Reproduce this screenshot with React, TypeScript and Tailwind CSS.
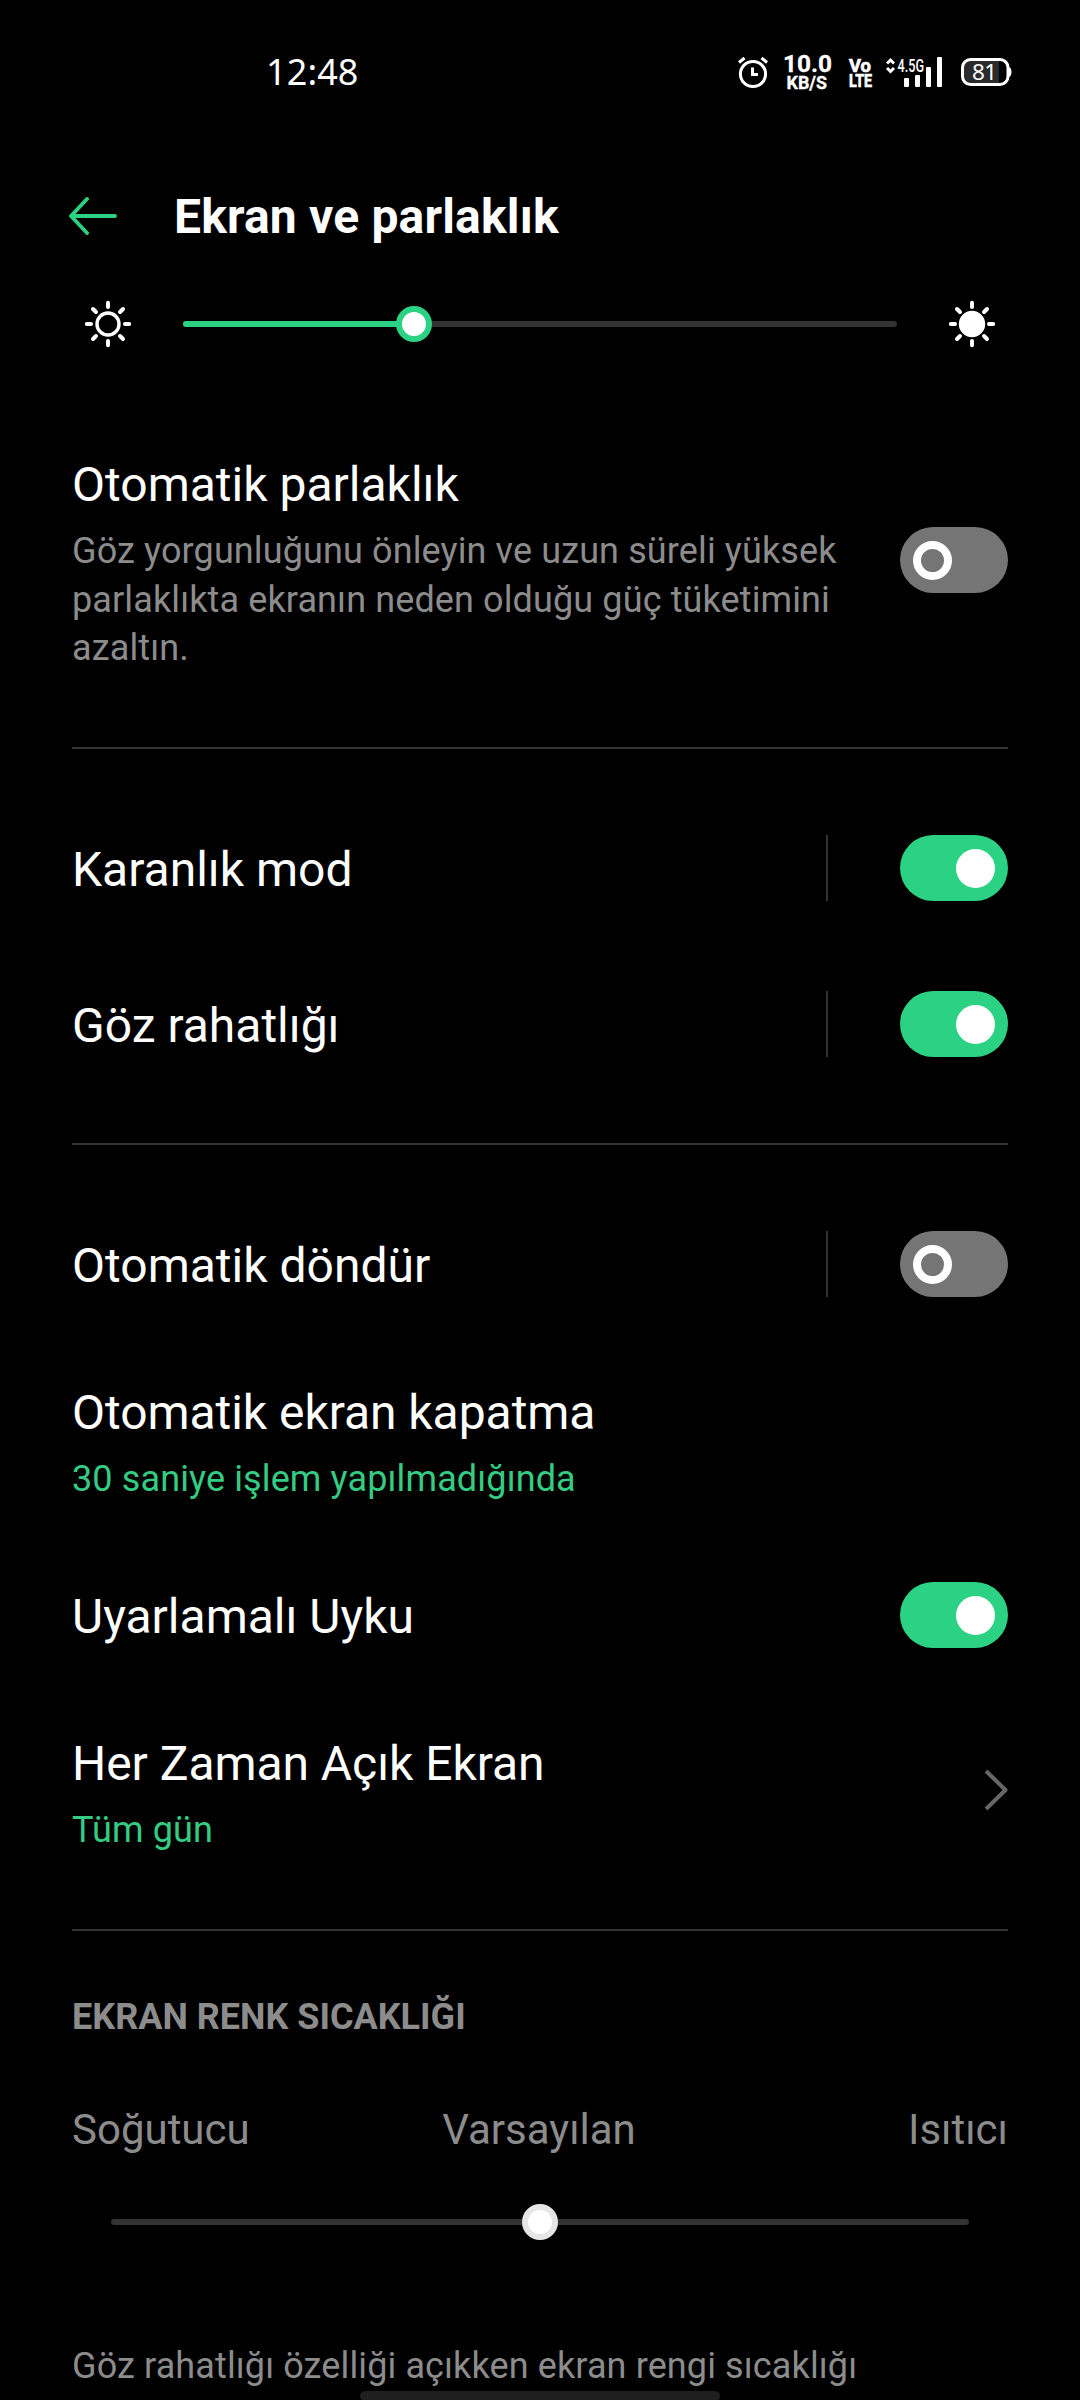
import { ReactNode } from 'react';

interface SwitchProps {
  on?: boolean;
}

interface RowProps {
  title: string;
  on?: boolean;
  split?: boolean;
}

interface SliderProps {
  value: number;
  active?: boolean;
}

function Switch({ on }: SwitchProps) {
  return (
    <div
      className={
        on
          ? 'flex h-[66px] w-[108px] shrink-0 items-center justify-end rounded-full bg-[#2cd284] px-[13px]'
          : 'flex h-[66px] w-[108px] shrink-0 items-center rounded-full bg-[#757575] px-[13px]'
      }
    >
      <div
        className={
          on
            ? 'h-[39px] w-[39px] rounded-full bg-white'
            : 'h-[39px] w-[39px] rounded-full border-8 border-white'
        }
      />
    </div>
  );
}

function Divider() {
  return <div className="mx-[72px] h-[2px] shrink-0 bg-[#333333]" />;
}

function SwitchRow({ title, on, split }: RowProps) {
  return (
    <div className="flex h-[156px] items-center px-[72px]">
      <span className="flex-1 pt-1 text-[48px] leading-[56px]">{title}</span>
      {split && <div className="mr-[72px] h-[66px] w-[2px] bg-[#333333]" />}
      <Switch on={on} />
    </div>
  );
}

function LinkRow({ title, value, children }: { title: string; value: string; children?: ReactNode }) {
  return (
    <div className="flex h-[195px] px-[72px] pt-[43px]">
      <div className="flex-1">
        <div className="text-[48px] leading-[56px] tracking-[-0.05px]">{title}</div>
        <div className="mt-[14px] text-[36px] leading-[48px] tracking-[0.12px] text-[#34cb82]">{value}</div>
      </div>
      {children}
    </div>
  );
}

function Slider({ value, active }: SliderProps) {
  return (
    <div className="relative flex h-9 flex-1 items-center">
      <div className="h-[6px] w-full overflow-hidden rounded-full bg-[#333333]">
        {active && <div className="h-full bg-[#2cd284]" style={{ width: `${value}%` }} />}
      </div>
      <div
        className={
          active
            ? 'absolute h-9 w-9 -translate-x-1/2 rounded-full border-[6px] border-[#2cd284] bg-white'
            : 'absolute h-9 w-9 -translate-x-1/2 rounded-full border-[6px] border-[#e6e6e6] bg-white'
        }
        style={{ left: `${value}%` }}
      />
    </div>
  );
}

function Sun({ filled }: { filled?: boolean }) {
  return (
    <svg width="48" height="48" viewBox="-24 -24 48 48" stroke="#fff" strokeLinecap="round">
      <circle r={filled ? 11.5 : 11} strokeWidth="3.4" fill={filled ? '#fff' : 'none'} />
      {[0, 45, 90, 135, 180, 225, 270, 315].map((angle) => (
        <path key={angle} d="M0 -21.2V-17" strokeWidth="4" transform={`rotate(${angle})`} />
      ))}
    </svg>
  );
}

function StatusBar() {
  return (
    <div className="flex h-[94px] items-start justify-between pl-[266px] pr-[68px] pt-[54px] text-white">
      <span className="font-['Noto_Sans'] text-[36px] leading-[36px] tracking-[0.1px]">12:48</span>
      <div className="flex">
        <svg width="30" height="40" viewBox="738 54 30 40" fill="none" stroke="#fff" strokeWidth="3">
          <circle cx="753" cy="74" r="12.6" />
          <path d="M752.5 67.5V74.5H758M739 62.5L744.5 58M767 62.5L761.5 58" />
        </svg>
        <svg className="ml-4 overflow-visible" width="48" height="40" viewBox="784 54 48 40" fill="#fff" stroke="#fff" strokeWidth="0.3">
          <text x="783" y="72.2" fontSize="23.5" fontWeight="700" textLength="49" lengthAdjust="spacingAndGlyphs">10.0</text>
          <text x="786.5" y="89.3" fontSize="17.5" fontWeight="700" textLength="40.5" lengthAdjust="spacingAndGlyphs">KB/S</text>
        </svg>
        <svg className="ml-[17px] overflow-visible" width="23" height="40" viewBox="849 54 23 40" fill="#fff" stroke="#fff" strokeWidth="0.7">
          <text x="849" y="71.5" fontSize="18.5" fontWeight="700" textLength="22" lengthAdjust="spacingAndGlyphs">Vo</text>
          <text x="849" y="86.7" fontSize="18" fontWeight="700" textLength="23" lengthAdjust="spacingAndGlyphs">LTE</text>
        </svg>
        <svg className="ml-[14px] overflow-visible" width="57" height="40" viewBox="886 54 57 40" fill="#fff">
          <path d="M887 63.5L890.5 60L894 63.5M887 68L890.5 71.5L894 68" fill="none" stroke="#fff" strokeWidth="3" />
          <text x="897.5" y="72" fontSize="18" fontWeight="500" textLength="26.5" lengthAdjust="spacingAndGlyphs">4.5G</text>
          <rect x="904" y="78" width="5" height="9" rx="1" />
          <rect x="915" y="75" width="5" height="12" rx="1" />
          <rect x="926" y="67" width="5" height="20" rx="1" />
          <rect x="937" y="57" width="5" height="30" rx="1" />
        </svg>
        <svg className="ml-[18px]" width="51" height="40" viewBox="961 54 51 40" fill="#fff">
          <path d="M970 60.5H999V83.5H970Q964 83.5 964 77.5V66.5Q964 60.5 970 60.5Z" fill="#2b2b2b" />
          <rect x="962.5" y="59.5" width="45.5" height="25" rx="8" fill="none" stroke="#fff" strokeWidth="3" />
          <path d="M1008 67Q1011.5 67 1011.5 72T1008 77Z" />
          <text x="972" y="79.5" className="font-['Noto_Sans']" fontSize="22.5" textLength="25">81</text>
        </svg>
      </div>
    </div>
  );
}

export default function App() {
  return (
    <div className="relative h-[2400px] w-[1080px] overflow-hidden bg-black font-[Roboto,sans-serif] text-white">
      <StatusBar />

      <div className="mt-[94px] flex h-14 items-center pl-[69px]">
        <svg width="48" height="38" viewBox="0 0 48 38" fill="none" stroke="#2cd284" strokeWidth="3.8" strokeLinecap="round" strokeLinejoin="round">
          <path d="M18 2L2 19L18 36M2 19H46" />
        </svg>
        <h1 className="ml-[57px] pt-[2px] text-[48px] font-bold leading-[56px] tracking-[0.18px]">Ekran ve parlaklık</h1>
      </div>

      <div className="mt-14 flex h-12 items-center px-[84px]">
        <Sun />
        <div className="flex flex-1 px-[51px]">
          <Slider value={32.4} active />
        </div>
        <Sun filled />
      </div>

      <div className="mt-[109px] flex h-[290px] justify-between px-[72px]">
        <div>
          <div className="text-[48px] leading-[56px]">Otomatik parlaklık</div>
          <div className="mt-[14px] w-[780px] text-[36px] leading-[48.5px] tracking-[0.12px] text-[#8c8c8c]">
            Göz yorgunluğunu önleyin ve uzun süreli yüksek parlaklıkta ekranın neden olduğu güç tüketimini azaltın.
          </div>
        </div>
        <div className="pt-[70px]">
          <Switch />
        </div>
      </div>
      <Divider />

      <div className="py-[41px]">
        <SwitchRow title="Karanlık mod" on split />
        <SwitchRow title="Göz rahatlığı" on split />
      </div>
      <Divider />

      <div className="py-[41px]">
        <SwitchRow title="Otomatik döndür" split />
        <LinkRow title="Otomatik ekran kapatma" value="30 saniye işlem yapılmadığında" />
        <SwitchRow title="Uyarlamalı Uyku" on />
        <LinkRow title="Her Zaman Açık Ekran" value="Tüm gün">
          <svg className="mt-[33px]" width="24" height="42" viewBox="0 0 24 42" fill="none" stroke="#666666" strokeWidth="4" strokeLinejoin="round">
            <path d="M2 2L21.5 21L2 40" />
          </svg>
        </LinkRow>
      </div>
      <Divider />

      <div className="px-[72px] pt-[62px] text-[#8c8c8c]">
        <h2 className="text-[36px] font-bold leading-[48px]">EKRAN RENK SICAKLIĞI</h2>
        <div className="mt-[64px] grid grid-cols-3 text-[42px] leading-[50px]">
          <span>Soğutucu</span>
          <span className="pr-[2px] text-center">Varsayılan</span>
          <span className="text-right">Isıtıcı</span>
        </div>
        <div className="mt-[49px] flex px-[39px]">
          <Slider value={50} />
        </div>
        <p className="mt-[102px] text-[36px] leading-[48px] tracking-[0.12px]">
          Göz rahatlığı özelliği açıkken ekran rengi sıcaklığı
        </p>
      </div>

      {/* gesture bar */}
      <div className="absolute left-[360px] top-[2391px] h-[10px] w-[360px] rounded-full bg-[#1f1f1f]" />
    </div>
  );
}
